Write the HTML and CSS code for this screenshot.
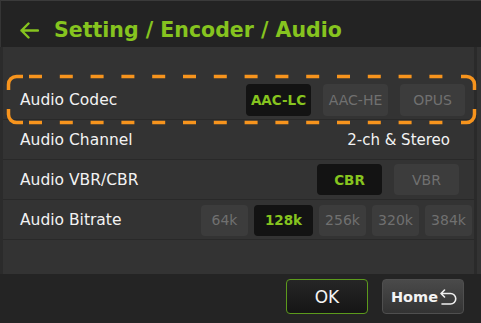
FILE: index.html
```html
<!DOCTYPE html>
<html>
<head>
<meta charset="utf-8">
<link rel="stylesheet" href="styles.css">
</head>
<body>
<div class="app">
  <div class="header">
    <svg class="back" width="19" height="17" viewBox="0 0 19 17"><path d="M1.5 8.5 H18 M8.5 1.5 L1.5 8.5 L8.5 15.5" fill="none" stroke="#86c41f" stroke-width="2.4" stroke-linecap="round" stroke-linejoin="round"/></svg>
    <div class="title">Setting / Encoder / Audio</div>
  </div>
  <div class="content">
    <div class="list">
      <div class="row row-codec">
        <div class="label">Audio Codec</div>
        <div class="opts">
          <div class="btn btn-codec active">AAC-LC</div>
          <div class="btn btn-codec">AAC-HE</div>
          <div class="btn btn-codec">OPUS</div>
        </div>
        <svg class="focus" width="474" height="53" viewBox="0 0 474 53">
          <g fill="none" stroke="#f7941d" stroke-width="3.5">
            <path d="M3.5 17 V11.5 A8 8 0 0 1 11.5 3.5 H18"/>
            <path d="M3.5 36 V41.5 A8 8 0 0 0 11.5 49.5 H18"/>
            <path d="M456 3.5 H461.5 A8 8 0 0 1 469.5 11.5 V17"/>
            <path d="M469.5 36 V41.5 A8 8 0 0 1 461.5 49.5 H456"/>
            <path d="M24 3.5 H438" stroke-dasharray="13 17.8"/>
            <path d="M24 49.5 H438" stroke-dasharray="13 17.8"/>
          </g>
        </svg>
      </div>
      <div class="row row-channel">
        <div class="label">Audio Channel</div>
        <div class="value">2-ch &amp; Stereo</div>
      </div>
      <div class="row row-vbr">
        <div class="label">Audio VBR/CBR</div>
        <div class="opts">
          <div class="btn btn-codec btn-short active">CBR</div>
          <div class="btn btn-codec btn-short">VBR</div>
        </div>
      </div>
      <div class="row row-rate">
        <div class="label">Audio Bitrate</div>
        <div class="opts opts-rate">
          <div class="btn btn-rate">64k</div>
          <div class="btn btn-rate wide active">128k</div>
          <div class="btn btn-rate">256k</div>
          <div class="btn btn-rate">320k</div>
          <div class="btn btn-rate">384k</div>
        </div>
      </div>
      <div class="list-tail"></div>
    </div>
  </div>
  <div class="footer">
    <div class="fbtn ok">OK</div>
    <div class="fbtn home">Home<svg class="ret" width="18" height="17" viewBox="0 0 18 17"><path d="M2 4.5 H11.5 A5.25 5.25 0 0 1 11.5 15 H3 M5.5 1 L2 4.5 L5.5 8" fill="none" stroke="#f0f0f0" stroke-width="1.6" stroke-linecap="round" stroke-linejoin="round"/></svg></div>
  </div>
</div>
</body>
</html>
```

FILE: styles.css
```css
html, body {
  margin: 0;
  padding: 0;
  background: #333333;
}
body {
  font-family: "DejaVu Sans", Verdana, sans-serif;
  color: #f2f2f2;
}
.app {
  width: 481px;
  height: 323px;
  display: flex;
  flex-direction: column;
  overflow: hidden;
}
.header {
  height: 47px;
  box-sizing: border-box;
  background: #232323;
  border-top: 1px solid #3a3a3a;
  border-left: 1px solid #353535;
  display: flex;
  align-items: center;
  padding-left: 19px;
  padding-top: 12px;
}
.back {
  display: block;
  margin-right: 15px;
}
.title {
  font-weight: bold;
  font-size: 20.5px;
  color: #86c41f;
  letter-spacing: 0;
}
.content {
  flex: 1;
  background: #333333;
  display: flex;
}
.list {
  width: 477px;
  box-sizing: border-box;
  border-left: 3px solid #2b2b2b;
  border-right: 3px solid #2a2a2a;
  padding-top: 33px;
  display: flex;
  flex-direction: column;
}
.row {
  position: relative;
  height: 40px;
  box-sizing: border-box;
  border-bottom: 1px solid #292929;
  display: flex;
  align-items: center;
  justify-content: space-between;
  padding-left: 17px;
}
.label {
  font-size: 15.5px;
  color: #f2f2f2;
  padding-top: 1px;
}
.value {
  font-size: 15px;
  color: #f2f2f2;
  margin-right: 24px;
}
.opts {
  display: flex;
  gap: 12px;
}
.row-codec .opts { margin-right: 9px; }
.row-vbr .opts { margin-right: 15px; }
.opts-rate { gap: 6px; margin-right: 2px; margin-top: 1px; }
.btn {
  height: 32px;
  box-sizing: border-box;
  border-radius: 4px;
  background: #3c3c3c;
  color: #707070;
  font-size: 14px;
  display: flex;
  align-items: center;
  justify-content: center;
}
.btn-codec { width: 65px; }
.btn-short { height: 31px; }
.btn-rate { width: 47px; height: 31px; }
.btn-rate.wide { width: 59px; }
.btn.active {
  background: #131313;
  color: #86c41f;
  font-weight: bold;
  font-size: 13.5px;
}
.focus {
  position: absolute;
  left: 2px;
  top: -7px;
}
.list-tail {
  height: 17px;
}
.footer {
  height: 49px;
  box-sizing: border-box;
  background: #242424;
  display: flex;
  justify-content: flex-end;
  align-items: flex-start;
  padding-top: 5px;
  padding-right: 17px;
  gap: 14px;
}
.fbtn {
  width: 82px;
  height: 35px;
  box-sizing: border-box;
  border-radius: 4px;
  display: flex;
  align-items: center;
  justify-content: center;
}
.ok {
  border: 1px solid #5c9a1c;
  background: linear-gradient(#262626, #151515);
  color: #f4f4f4;
  font-size: 17px;
}
.home {
  border: 1px solid #4f4f4f;
  background: linear-gradient(#4a4a4a, #333333);
  color: #f4f4f4;
  font-weight: bold;
  font-size: 14.5px;
  padding-left: 2px;
}
.ret {
  display: block;
  margin-left: 1px;
  margin-top: 1px;
}
```
